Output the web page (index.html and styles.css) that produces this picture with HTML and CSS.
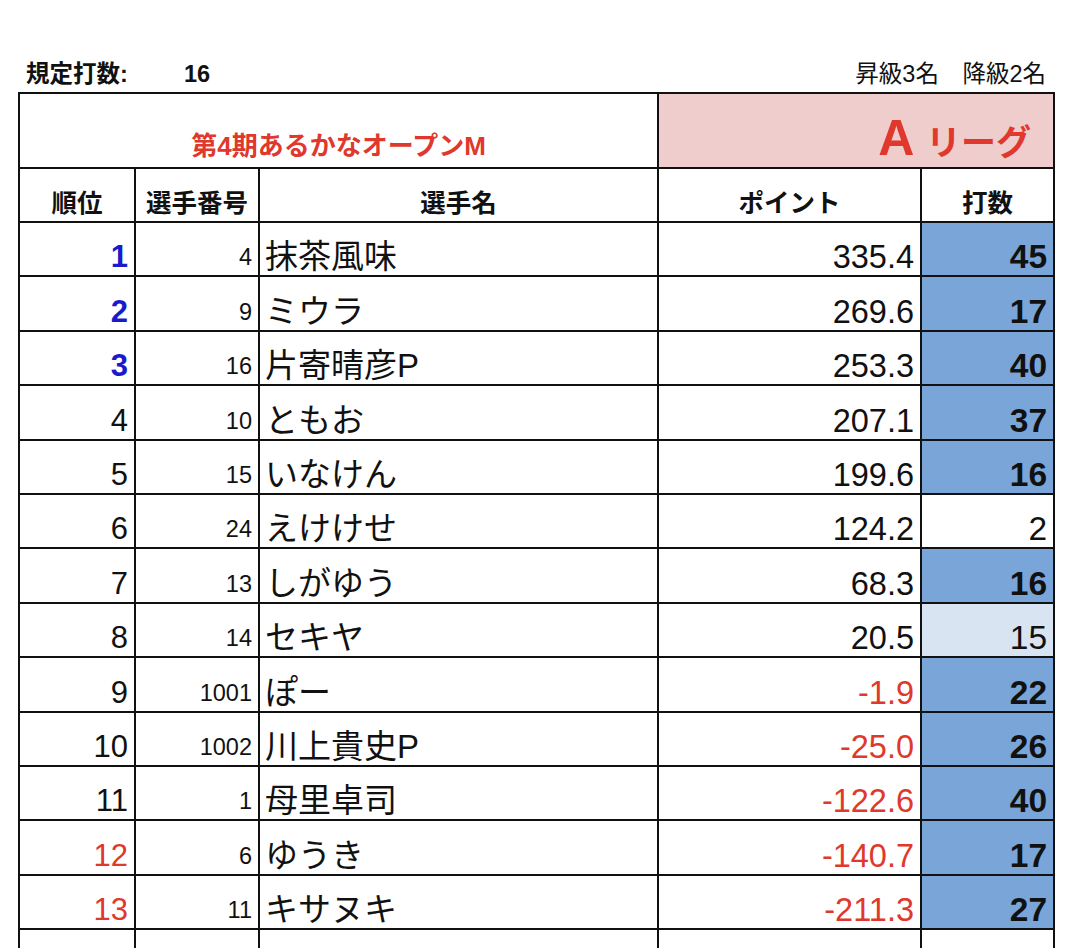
FILE: index.html
```html
<!DOCTYPE html>
<html lang="ja">
<head>
<meta charset="utf-8">
<title>第4期あるかなオープンM Aリーグ</title>
<link rel="stylesheet" href="styles.css">
</head>
<body>
<div class="info">
  <div class="info-left"><span class="info-label">規定打数:</span><span class="info-value">16</span></div>
  <div class="info-right">昇級3名　降級2名</div>
</div>
<table class="league">
  <colgroup>
    <col class="c-rank"><col class="c-no"><col class="c-name"><col class="c-pt"><col class="c-cnt">
  </colgroup>
  <tr class="title-row">
    <td colspan="3" class="title">第4期あるかなオープンM</td>
    <td colspan="2" class="league-name"><span class="league-a">A</span> リーグ</td>
  </tr>
  <tr class="head-row">
    <th>順位</th><th>選手番号</th><th>選手名</th><th>ポイント</th><th>打数</th>
  </tr>
  <tr class="row"><td class="rank up">1</td><td class="no">4</td><td class="name">抹茶風味</td><td class="pt">335.4</td><td class="cnt ok">45</td></tr>
  <tr class="row"><td class="rank up">2</td><td class="no">9</td><td class="name">ミウラ</td><td class="pt">269.6</td><td class="cnt ok">17</td></tr>
  <tr class="row"><td class="rank up">3</td><td class="no">16</td><td class="name">片寄晴彦P</td><td class="pt">253.3</td><td class="cnt ok">40</td></tr>
  <tr class="row"><td class="rank">4</td><td class="no">10</td><td class="name">ともお</td><td class="pt">207.1</td><td class="cnt ok">37</td></tr>
  <tr class="row"><td class="rank">5</td><td class="no">15</td><td class="name">いなけん</td><td class="pt">199.6</td><td class="cnt ok">16</td></tr>
  <tr class="row"><td class="rank">6</td><td class="no">24</td><td class="name">えけけせ</td><td class="pt">124.2</td><td class="cnt">2</td></tr>
  <tr class="row"><td class="rank">7</td><td class="no">13</td><td class="name">しがゆう</td><td class="pt">68.3</td><td class="cnt ok">16</td></tr>
  <tr class="row"><td class="rank">8</td><td class="no">14</td><td class="name">セキヤ</td><td class="pt">20.5</td><td class="cnt near">15</td></tr>
  <tr class="row"><td class="rank">9</td><td class="no">1001</td><td class="name">ぽー</td><td class="pt neg">-1.9</td><td class="cnt ok">22</td></tr>
  <tr class="row"><td class="rank">10</td><td class="no">1002</td><td class="name">川上貴史P</td><td class="pt neg">-25.0</td><td class="cnt ok">26</td></tr>
  <tr class="row"><td class="rank">11</td><td class="no">1</td><td class="name">母里卓司</td><td class="pt neg">-122.6</td><td class="cnt ok">40</td></tr>
  <tr class="row"><td class="rank down">12</td><td class="no">6</td><td class="name">ゆうき</td><td class="pt neg">-140.7</td><td class="cnt ok">17</td></tr>
  <tr class="row"><td class="rank down">13</td><td class="no">11</td><td class="name">キサヌキ</td><td class="pt neg">-211.3</td><td class="cnt ok">27</td></tr>
  <tr class="row"><td class="rank down">14</td><td class="no"></td><td class="name"></td><td class="pt"></td><td class="cnt"></td></tr>
</table>
</body>
</html>
```

FILE: styles.css
```css
html, body {
  margin: 0;
  padding: 0;
  background: #ffffff;
}

body {
  font-family: "Liberation Sans", "Noto Sans CJK JP", sans-serif;
  color: #111111;
}

.info {
  display: flex;
  justify-content: space-between;
  align-items: flex-end;
  padding: 61px 25px 4px 26px;
  height: 27px;
  line-height: 27px;
  font-size: 23.5px;
}

.info-left {
  font-weight: bold;
}

.info-label {
  display: inline-block;
  width: 158px;
}

.league {
  margin-left: 18px;
  width: 1035px;
  border-collapse: collapse;
  table-layout: fixed;
}

.c-rank { width: 116px; }
.c-no { width: 124px; }
.c-name { width: 399px; }
.c-pt { width: 263px; }
.c-cnt { width: 133px; }

.league td,
.league th {
  border: 2px solid #111111;
  padding: 0;
  vertical-align: bottom;
  white-space: nowrap;
  overflow: hidden;
}

.title-row td {
  height: 67px;
}

.title {
  text-align: center;
  color: #e0382c;
  font-weight: bold;
  font-size: 26px;
  line-height: 30px;
  padding-bottom: 6px !important;
}

.league-name {
  background: #efcdcc;
  color: #e0382c;
  font-weight: bold;
  font-size: 35px;
  text-align: right;
  line-height: 44px;
  padding-right: 22px !important;
  padding-bottom: 2px !important;
}

.league-a {
  font-size: 50px;
  margin-right: 2px;
}

.head-row th {
  height: 49px;
  font-size: 25.5px;
  font-weight: bold;
  text-align: center;
  line-height: 30px;
  padding-bottom: 3px;
}

.row td {
  height: 52.4px;
  line-height: 36px;
}

.rank {
  text-align: right;
  font-size: 31px;
  padding-right: 6px !important;
}

.rank.up {
  color: #1a1acd;
  font-weight: bold;
}

.rank.down {
  color: #e0382c;
}

.no {
  text-align: right;
  font-size: 23.5px;
  padding-right: 6px !important;
}

.name {
  text-align: left;
  font-size: 33px;
  padding-left: 5px !important;
}

.pt {
  text-align: right;
  font-size: 32.5px;
  padding-right: 6px !important;
}

.pt.neg {
  color: #e0382c;
}

.cnt {
  text-align: right;
  font-size: 33.5px;
  padding-right: 6px !important;
}

.cnt.ok {
  background: #7aa5d8;
  font-weight: bold;
}

.cnt.near {
  background: #d9e4f2;
}
```
